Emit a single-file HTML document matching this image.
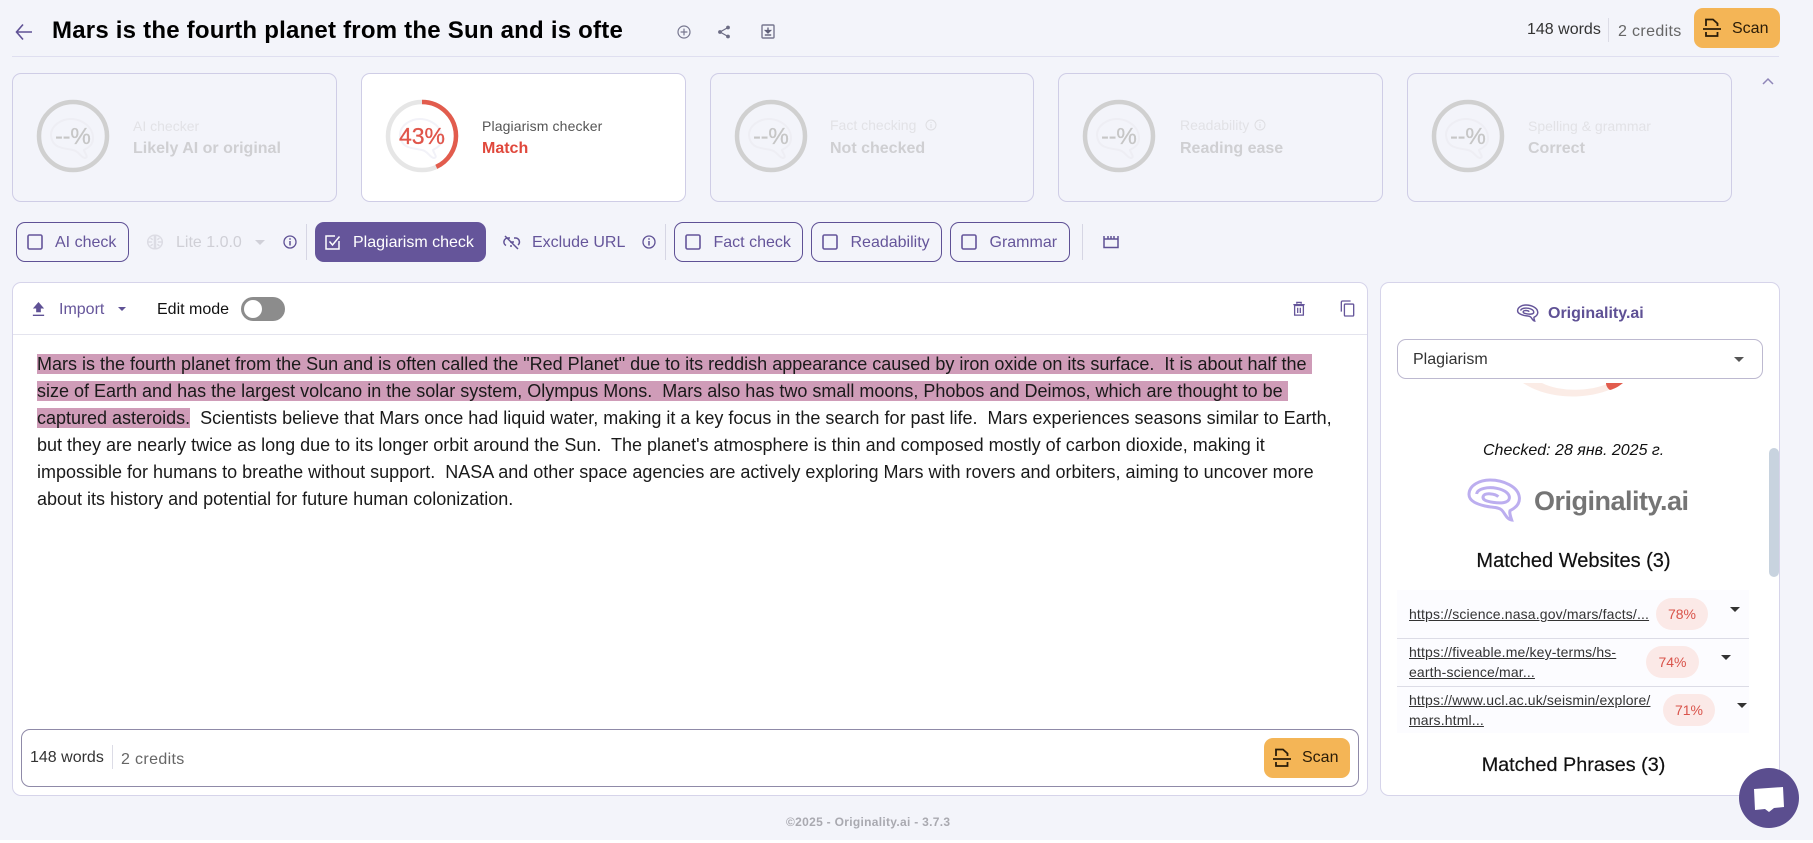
<!DOCTYPE html>
<html><head><meta charset="utf-8"><title>Originality.ai</title>
<style>
html,body{margin:0;padding:0;background:#fff}
#p{position:relative;width:1813px;height:843px;overflow:hidden;background:#fff;font-family:"Liberation Sans",Arial,sans-serif}
#bg{position:absolute;left:0;top:0;width:1813px;height:840px;background:#f3f4fa}
.a{position:absolute;white-space:pre}
.card{position:absolute;top:73px;height:127px;border:1px solid #cfcde6;border-radius:9px;box-sizing:content-box}
.btn{position:absolute;top:222px;height:38px;border:1px solid #5f5195;border-radius:9px}
.l{font-size:16px;line-height:20px;color:#65559a}
.lab{font-size:14px;line-height:18px;top:117px;color:#e2e2e6}
.val{font-size:16px;line-height:20px;top:139px;color:#cfcfd2;font-weight:bold}
.pct{font-size:23px;line-height:28px;top:122px;color:#c6c6c6;text-align:center;width:60px;-webkit-text-stroke:.3px currentColor}
.hl{background:#cf9cb8}
.url{font-size:14px;line-height:20px;color:#333;text-decoration:underline;letter-spacing:.15px}
.badge{position:absolute;height:32px;line-height:32px;border-radius:16px;background:#fbe9e7;color:#d9534a;font-size:14px;text-align:center}
.tri{position:absolute;width:0;height:0;border-left:5px solid transparent;border-right:5px solid transparent;border-top:5px solid #333}
svg{position:absolute;overflow:visible}
.s{fill:none;stroke:#65559a;stroke-width:1.6}
</style></head><body><div id="p"><div id="bg"></div>

<!-- header -->
<svg style="left:15px;top:22px" width="20" height="20" viewBox="0 0 20 20"><path d="M17 10H1.500M8 2.500L1.500 10L8 17.500" fill="none" stroke="#5f5195" stroke-width="1.600"/></svg>
<div class="a" style="left:52px;top:17px;font-size:24px;line-height:28px;font-weight:bold;color:#000;letter-spacing:.22px">Mars is the fourth planet from the Sun and is ofte</div>
<svg style="left:677px;top:25px" width="14" height="14" viewBox="0 0 14 14"><circle cx="7" cy="7" r="6" fill="none" stroke="#77778f" stroke-width="1.2"/><path d="M7 3.600V10.400M3.600 7H10.400" stroke="#77778f" stroke-width="1.2"/></svg>
<svg style="left:717px;top:25px" width="14" height="14" viewBox="0 0 14 14"><path d="M11 2.500L3 7L11 11.500" fill="none" stroke="#6c6c84" stroke-width="1.2"/><circle cx="11" cy="2.500" r="1.900" fill="#6c6c84"/><circle cx="3" cy="7" r="1.900" fill="#6c6c84"/><circle cx="11" cy="11.500" r="1.900" fill="#6c6c84"/></svg>
<svg style="left:761px;top:24px" width="14" height="15" viewBox="0 0 14 15"><rect x="1" y="1" width="12" height="13" rx="1" fill="none" stroke="#77778f" stroke-width="1.400"/><path d="M7 3.500V8.500M4.500 6.500L7 9L9.500 6.500Z" stroke="#5f5f78" stroke-width="1.300" fill="#5f5f78"/><path d="M3.800 11H10.200" stroke="#5f5f78" stroke-width="1.400"/></svg>
<div class="a" style="left:1527px;top:20px;font-size:16px;line-height:20px;color:#333">148 words</div>
<div class="a" style="left:1608px;top:18px;width:1px;height:24px;background:#dcdce6"></div>
<div class="a" style="left:1618px;top:22px;font-size:16px;line-height:20px;color:#666;letter-spacing:.35px">2 credits</div>
<div class="a" style="left:1694px;top:8px;width:86px;height:40px;background:#f4b556;border-radius:9px"></div>
<svg style="left:1702px;top:18px" width="20" height="20" viewBox="0 0 20 20"><path d="M4 8V1.500H11L15.500 5.500V8M4 14V18H15.500V14" fill="none" stroke="#2a1c08" stroke-width="1.800"/><path d="M1 11H19" stroke="#2a1c08" stroke-width="1.800"/></svg>
<div class="a" style="left:1732px;top:19px;font-size:16px;line-height:20px;color:#2a1c08">Scan</div>
<div class="a" style="left:12px;top:56px;width:1767px;height:1px;background:#dfdff0"></div>

<!-- cards -->
<div class="card" style="left:12px;width:323px"></div>
<div class="card" style="left:361px;width:323px;background:#fff"></div>
<div class="card" style="left:710px;width:322px"></div>
<div class="card" style="left:1058px;width:323px"></div>
<div class="card" style="left:1407px;width:323px"></div>

<svg style="left:37px;top:100px" width="72" height="72" viewBox="0 0 72 72"><path d="M27 20C39 16 56 24 56 38C56 46 50 48 47 50C48 54 52 57 48 58C44 58 42 51 36 50C26 48 18 48 15 40C12 32 16 24 27 20Z" fill="none" stroke="#eeeef4" stroke-width="2"/><circle cx="36" cy="36" r="34" fill="none" stroke="#d0d0d0" stroke-width="4.500"/></svg>
<div class="a pct" style="left:43px">--%</div>
<div class="a lab" style="left:133px">AI checker</div>
<div class="a val" style="left:133px">Likely AI or original</div>

<svg style="left:386px;top:100px" width="72" height="72" viewBox="0 0 72 72"><path d="M27 20C39 16 56 24 56 38C56 46 50 48 47 50C48 54 52 57 48 58C44 58 42 51 36 50C26 48 18 48 15 40C12 32 16 24 27 20Z" fill="none" stroke="#f2f2f8" stroke-width="2"/><circle cx="36" cy="36" r="34" fill="none" stroke="#e6e6e6" stroke-width="4.500"/><circle cx="36" cy="36" r="34" fill="none" stroke="#e25c4d" stroke-width="4.500" stroke-dasharray="91.900 213.600" transform="rotate(-90 36 36)"/></svg>
<div class="a pct" style="left:392px;color:#e0554a">43%</div>
<div class="a lab" style="left:482px;color:#555;letter-spacing:.12px">Plagiarism checker</div>
<div class="a val" style="left:482px;color:#e0483c">Match</div>

<svg style="left:735px;top:100px" width="72" height="72" viewBox="0 0 72 72"><path d="M27 20C39 16 56 24 56 38C56 46 50 48 47 50C48 54 52 57 48 58C44 58 42 51 36 50C26 48 18 48 15 40C12 32 16 24 27 20Z" fill="none" stroke="#eeeef4" stroke-width="2"/><circle cx="36" cy="36" r="34" fill="none" stroke="#d0d0d0" stroke-width="4.500"/></svg>
<div class="a pct" style="left:741px">--%</div>
<div class="a lab" style="left:830px;top:116px">Fact checking</div>
<svg style="left:925px;top:119px" width="12" height="12" viewBox="0 0 12 12"><circle cx="6" cy="6" r="5" fill="none" stroke="#dedee2"/><path d="M6 5V9M6 3V4" stroke="#dedee2"/></svg>
<div class="a val" style="left:830px">Not checked</div>

<svg style="left:1083px;top:100px" width="72" height="72" viewBox="0 0 72 72"><path d="M27 20C39 16 56 24 56 38C56 46 50 48 47 50C48 54 52 57 48 58C44 58 42 51 36 50C26 48 18 48 15 40C12 32 16 24 27 20Z" fill="none" stroke="#eeeef4" stroke-width="2"/><circle cx="36" cy="36" r="34" fill="none" stroke="#d0d0d0" stroke-width="4.500"/></svg>
<div class="a pct" style="left:1089px">--%</div>
<div class="a lab" style="left:1180px;top:116px">Readability</div>
<svg style="left:1254px;top:119px" width="12" height="12" viewBox="0 0 12 12"><circle cx="6" cy="6" r="5" fill="none" stroke="#dedee2"/><path d="M6 5V9M6 3V4" stroke="#dedee2"/></svg>
<div class="a val" style="left:1180px">Reading ease</div>

<svg style="left:1432px;top:100px" width="72" height="72" viewBox="0 0 72 72"><path d="M27 20C39 16 56 24 56 38C56 46 50 48 47 50C48 54 52 57 48 58C44 58 42 51 36 50C26 48 18 48 15 40C12 32 16 24 27 20Z" fill="none" stroke="#eeeef4" stroke-width="2"/><circle cx="36" cy="36" r="34" fill="none" stroke="#d0d0d0" stroke-width="4.500"/></svg>
<div class="a pct" style="left:1438px">--%</div>
<div class="a lab" style="left:1528px">Spelling &amp; grammar</div>
<div class="a val" style="left:1528px">Correct</div>

<svg style="left:1762px;top:77px" width="12" height="8" viewBox="0 0 12 8"><path d="M1 7L6 2L11 7" fill="none" stroke="#8f86b8" stroke-width="1.500"/></svg>

<!-- toolbar -->
<div class="btn" style="left:16px;width:111px"></div>
<svg style="left:27px;top:234px" width="16" height="16"><rect x="1" y="1" width="14" height="14" rx="1.500" class="s"/></svg>
<div class="a l" style="left:55px;top:232.500px">AI check</div>
<svg style="left:146px;top:233px" width="18" height="18" viewBox="0 0 16 16"><g fill="none" stroke="#dcdce4" stroke-width="1.300"><path d="M7.500 2C4 2 1.500 5 1.500 8s2.500 6 6 6V2ZM8.500 2C12 2 14.500 5 14.500 8s-2.500 6-6 6V2Z"/><path d="M2 8H5.500M10.500 8H14M4 4.500L6 6M12 4.500L10 6M4 11.500L6 10M12 11.500L10 10"/></g></svg>
<div class="a l" style="left:176px;top:232.500px;color:#cfcfd6">Lite 1.0.0</div>
<div class="tri" style="left:255px;top:240px;border-top-color:#d0d0d8"></div>
<svg style="left:283px;top:235px" width="14" height="14" viewBox="0 0 14 14"><circle cx="7" cy="7" r="6" fill="none" stroke="#5f5195" stroke-width="1.300"/><path d="M7 6V10.500M7 3.300V4.800" stroke="#5f5195" stroke-width="1.500"/></svg>
<div class="a" style="left:306px;top:224px;width:1px;height:36px;background:#d6d6e4"></div>
<div class="a" style="left:315px;top:222px;width:171px;height:40px;background:#65559a;border-radius:9px"></div>
<svg style="left:325px;top:234px" width="16" height="16" viewBox="0 0 16 16"><path d="M14 7V15H1V2H10" fill="none" stroke="#fff" stroke-width="1.500"/><path d="M4.500 7.500L7.500 11L14.500 2.500" fill="none" stroke="#fff" stroke-width="1.500"/></svg>
<div class="a l" style="left:353px;top:232.500px;color:#fff">Plagiarism check</div>
<svg style="left:503px;top:234px" width="18" height="16" viewBox="0 0 18 16"><g fill="none" stroke="#5f5195" stroke-width="1.500"><path d="M7 4H5A4 4 0 0 0 3 11.500M11 4H13A4 4 0 0 1 15 11M7 12H9M7 8H11M2 2L15 15"/></g></svg>
<div class="a l" style="left:532px;top:232.500px">Exclude URL</div>
<svg style="left:642px;top:235px" width="14" height="14" viewBox="0 0 14 14"><circle cx="7" cy="7" r="6" fill="none" stroke="#5f5195" stroke-width="1.300"/><path d="M7 6V10.500M7 3.300V4.800" stroke="#5f5195" stroke-width="1.500"/></svg>
<div class="a" style="left:665px;top:224px;width:1px;height:36px;background:#d6d6e4"></div>
<div class="btn" style="left:674px;width:127px"></div>
<svg style="left:685px;top:234px" width="16" height="16"><rect x="1" y="1" width="14" height="14" rx="1.500" class="s"/></svg>
<div class="a l" style="left:713.500px;top:232.500px">Fact check</div>
<div class="btn" style="left:811px;width:129px"></div>
<svg style="left:822px;top:234px" width="16" height="16"><rect x="1" y="1" width="14" height="14" rx="1.500" class="s"/></svg>
<div class="a l" style="left:850.500px;top:232.500px">Readability</div>
<div class="btn" style="left:950px;width:118px"></div>
<svg style="left:961px;top:234px" width="16" height="16"><rect x="1" y="1" width="14" height="14" rx="1.500" class="s"/></svg>
<div class="a l" style="left:989.500px;top:232.500px">Grammar</div>
<div class="a" style="left:1082px;top:224px;width:1px;height:36px;background:#d6d6e4"></div>
<svg style="left:1103px;top:235px" width="16" height="14" viewBox="0 0 16 14"><path d="M1 4H15V12.500H1ZM1 1V4M5 1V4M8 1V4M11 1V4M15 1V4" fill="none" stroke="#5f5195" stroke-width="1.500"/></svg>

<!-- main panel -->
<div class="a" style="left:12px;top:282px;width:1356px;height:514px;background:#fff;border:1px solid #d6d4ea;border-radius:9px;box-sizing:border-box"></div>
<div class="a" style="left:13px;top:334px;width:1354px;height:1px;background:#e4e4ee"></div>
<svg style="left:31px;top:300px" width="15" height="17" viewBox="0 0 16 18"><path d="M8 2L14 9H10.500V13H5.500V9H2Z M2 15.500H14V17H2Z" fill="#5f5195"/></svg>
<div class="a l" style="left:59px;top:300px">Import</div>
<div class="tri" style="left:118px;top:307px;border-left-width:4px;border-right-width:4px;border-top:4px solid #5f5195"></div>
<div class="a" style="left:157px;top:300px;font-size:16px;line-height:20px;color:#111">Edit mode</div>
<div class="a" style="left:241px;top:297px;width:44px;height:24px;background:#8c8c8c;border-radius:12px"></div>
<div class="a" style="left:244px;top:300px;width:18px;height:18px;background:#fff;border-radius:50%"></div>
<svg style="left:1292px;top:301px" width="14" height="16" viewBox="0 0 16 18"><path d="M3 5V16H13V5ZM1.500 4H14.500M5.500 3V1.500H10.500V3M6.500 7.500V13.500M9.500 7.500V13.500" fill="none" stroke="#65559a" stroke-width="1.500"/></svg>
<svg style="left:1340px;top:300px" width="15" height="17" viewBox="0 0 17 19"><path d="M12 1H3C2 1 1.500 1.500 1.500 2.500V13" fill="none" stroke="#65559a" stroke-width="1.500"/><rect x="5" y="4.500" width="10.500" height="13.500" rx="1" fill="none" stroke="#65559a" stroke-width="1.500"/></svg>

<div class="a" style="left:37px;top:350.500px;font-size:18px;line-height:27px;color:#1a1a1a"><span class="hl">Mars is the fourth planet from the Sun and is often called the "Red Planet" due to its reddish appearance caused by iron oxide on its surface.  It is about half the </span>
<span class="hl">size of Earth and has the largest volcano in the solar system, Olympus Mons.  Mars also has two small moons, Phobos and Deimos, which are thought to be </span>
<span class="hl">captured asteroids.</span>  Scientists believe that Mars once had liquid water, making it a key focus in the search for past life.  Mars experiences seasons similar to Earth,
but they are nearly twice as long due to its longer orbit around the Sun.  The planet's atmosphere is thin and composed mostly of carbon dioxide, making it
impossible for humans to breathe without support.  NASA and other space agencies are actively exploring Mars with rovers and orbiters, aiming to uncover more
about its history and potential for future human colonization.</div>

<div class="a" style="left:21px;top:729px;width:1338px;height:58px;background:#fff;border:1px solid #8f8aa8;border-radius:9px;box-sizing:border-box"></div>
<div class="a" style="left:30px;top:748px;font-size:16px;line-height:20px;color:#333">148 words</div>
<div class="a" style="left:112px;top:745px;width:1px;height:24px;background:#dcdce6"></div>
<div class="a" style="left:121px;top:750px;font-size:16px;line-height:20px;color:#666;letter-spacing:.35px">2 credits</div>
<div class="a" style="left:1264px;top:738px;width:86px;height:40px;background:#f4b556;border-radius:9px"></div>
<svg style="left:1272px;top:748px" width="20" height="20" viewBox="0 0 20 20"><path d="M4 8V1.500H11L15.500 5.500V8M4 14V18H15.500V14" fill="none" stroke="#2a1c08" stroke-width="1.800"/><path d="M1 11H19" stroke="#2a1c08" stroke-width="1.800"/></svg>
<div class="a" style="left:1302px;top:748px;font-size:16px;line-height:20px;color:#2a1c08">Scan</div>

<div class="a" style="left:786px;top:814px;font-size:12px;line-height:16px;font-weight:bold;color:#a9a9b0;letter-spacing:.3px">©2025 - Originality.ai - 3.7.3</div>

<!-- right panel -->
<div class="a" style="left:1380px;top:282px;width:400px;height:514px;background:#fff;border:1px solid #d6d4ea;border-radius:9px;box-sizing:border-box"></div>
<svg style="left:1514px;top:301px" width="28" height="24" viewBox="0 0 210 180"><path d="M155 150C150 135 148 128 150 122C170 112 180 100 178 82C175 50 130 30 90 30C60 30 28 45 27 72C26 95 55 103 75 108C95 113 115 110 125 120C135 130 140 148 155 150ZM50 72C52 55 85 50 110 55C135 60 150 72 148 85C146 100 120 100 100 97C80 94 65 90 70 78C75 68 105 70 115 80" fill="none" stroke="#65559a" stroke-width="11"/></svg>
<div class="a" style="left:1548px;top:304px;font-size:16px;line-height:20px;font-weight:bold;color:#5f5195">Originality.ai</div>

<div class="a" style="left:1397px;top:339px;width:366px;height:40px;background:#fff;border:1px solid #bdb9d0;border-radius:9px;box-sizing:border-box"></div>
<div class="a" style="left:1413px;top:349.500px;font-size:16px;line-height:20px;color:#333">Plagiarism</div>
<div class="tri" style="left:1734px;top:357px;border-top-color:#555"></div>

<svg style="left:1520px;top:383px" width="106" height="16" viewBox="0 0 106 16"><path d="M3 0C30 18 75 18 103 0H89C70 9 40 9 22 0Z" fill="#fbece6"/><path d="M86 0H103C98 4 94 6 90 7C88 6 86 3 86 0Z" fill="#e25c4d"/></svg>

<div class="a" style="left:1483px;width:180px;top:441px;text-align:center;font-size:16px;line-height:20px;font-style:italic;color:#111">Checked: 28 янв. 2025 г.</div>

<svg style="left:1460px;top:470px" width="70" height="60" viewBox="0 0 210 180"><path d="M155 150C150 135 148 128 150 122C170 112 180 100 178 82C175 50 130 30 90 30C60 30 28 45 27 72C26 95 55 103 75 108C95 113 115 110 125 120C135 130 140 148 155 150ZM50 72C52 55 85 50 110 55C135 60 150 72 148 85C146 100 120 100 100 97C80 94 65 90 70 78C75 68 105 70 115 80" fill="none" stroke="#bcaeef" stroke-width="9"/></svg>
<div class="a" style="left:1534px;top:484px;font-size:27px;line-height:34px;font-weight:bold;color:#757575;letter-spacing:-.5px">Originality.ai</div>

<div class="a" style="left:1380px;width:387px;top:548px;text-align:center;font-size:20px;line-height:26px;color:#111;-webkit-text-stroke:.2px #111">Matched Websites (3)</div>

<div class="a" style="left:1397px;top:590px;width:352px;height:143px;background:#fcfcff"></div>
<div class="a" style="left:1397px;top:638px;width:352px;height:1px;background:#dcdce6"></div>
<div class="a" style="left:1397px;top:686px;width:352px;height:1px;background:#dcdce6"></div>

<div class="a url" style="left:1409px;top:604px">https://science.nasa.gov/mars/facts/...</div>
<div class="badge" style="left:1656px;top:598px;width:52px">78%</div>
<div class="tri" style="left:1730px;top:607px"></div>

<div class="a url" style="left:1409px;top:642px">https://fiveable.me/key-terms/hs-
earth-science/mar...</div>
<div class="badge" style="left:1646px;top:646px;width:53px">74%</div>
<div class="tri" style="left:1721px;top:655px"></div>

<div class="a url" style="left:1409px;top:690px">https://www.ucl.ac.uk/seismin/explore/
mars.html...</div>
<div class="badge" style="left:1663px;top:694px;width:52px">71%</div>
<div class="tri" style="left:1737px;top:703px"></div>

<div class="a" style="left:1380px;width:387px;top:752px;text-align:center;font-size:19.800px;line-height:26px;color:#111;-webkit-text-stroke:.2px #111">Matched Phrases (3)</div>

<div class="a" style="left:1769px;top:448px;width:10px;height:129px;background:#c8d3df;border-radius:5px"></div>

<div class="a" style="left:1739px;top:768px;width:60px;height:60px;border-radius:50%;background:#5b4e8f"></div>
<svg style="left:1753px;top:785px" width="32" height="28" viewBox="0 0 32 28"><path d="M1 4L30 2L31 22L21 23L16 27L12 24L2 25Z" fill="#fff"/></svg>
</div></body></html>
